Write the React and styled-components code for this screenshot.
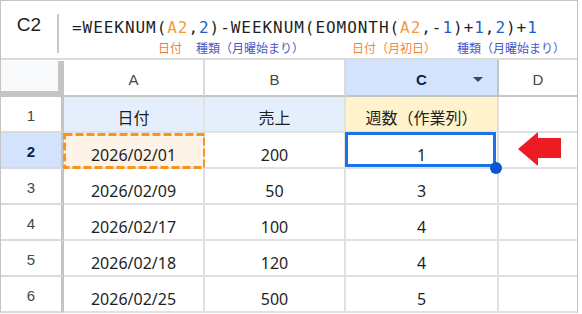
import React from 'react';
import styled, { createGlobalStyle } from 'styled-components';

const GlobalStyle = createGlobalStyle`
    body {
        margin: 0;
        background: #ffffff;
        font-family: "Noto Sans", "Noto Sans CJK JP", sans-serif;
    }
`;

const Frame = styled.div`
    width: 578px;
    box-sizing: border-box;
    border: 1px solid #c4c4c4;
    border-bottom: none;
    overflow: hidden;
`;

const FormulaBar = styled.div`
    display: flex;
    height: 57px;
    border-bottom: 2px solid #dadada;
`;

const NameBox = styled.div`
    width: 56px;
    padding-top: 12px;
    text-align: center;
    font-family: "Liberation Sans", Arial, sans-serif;
    font-size: 19px;
    line-height: 24px;
    color: #1f1f1f;
`;

const Divider = styled.div`
    width: 2px;
    height: 39px;
    margin-top: 13px;
    background: #c7c7c7;
`;

const FormulaArea = styled.div`
    display: flex;
    flex-direction: column;
    padding: 17px 0 0 13px;
`;

const FormulaLine = styled.div`
    font-family: "DejaVu Sans Mono", monospace;
    font-size: 16px;
    line-height: 20px;
    letter-spacing: 0.95px;
    color: #1f1f1f;
    white-space: nowrap;
`;

const Token = styled.span`
    color: ${p => p.$color || 'inherit'};
`;

const NoteLine = styled.div`
    display: flex;
    margin-top: 3px;
    font-family: "Noto Sans CJK JP", sans-serif;
    font-size: 12px;
    line-height: 14px;
    white-space: nowrap;
`;

const Note = styled.span`
    color: ${p => p.$color};
    margin-left: ${p => p.$gap}px;
`;

const Sheet = styled.div`
    display: grid;
    grid-template-columns: 63px 141px 141px 153px 78px;
    grid-template-rows: 37px repeat(6, 36px);
`;

const Corner = styled.div`
    background: #f8f9fa;
    border-right: 6px solid #c4c4c4;
    border-bottom: 6px solid #c4c4c4;
    margin-top: 1px;
`;

const ColHeader = styled.div`
    position: relative;
    display: grid;
    grid-template-columns: 1fr auto 1fr;
    align-items: center;
    padding-top: 3px;
    background: ${p => (p.$active ? '#d3e3fd' : '#ffffff')};
    border-right: ${p => (p.$last ? 'none' : `2px solid ${p.$active ? '#c4c4c4' : '#dadada'}`)};
    border-bottom: 2px solid #c4c4c4;
    font-family: "Liberation Sans", Arial, sans-serif;
    font-size: 15px;
    font-weight: ${p => (p.$active ? 700 : 400)};
    color: ${p => (p.$active ? '#0b2350' : '#444746')};
`;

const ColLabel = styled.span`
    grid-column: 2;
`;

const DropArrow = styled.span`
    grid-column: 3;
    justify-self: end;
    margin-right: 14px;
    width: 0;
    height: 0;
    border-left: 5.5px solid transparent;
    border-right: 5.5px solid transparent;
    border-top: 5px solid #444746;
`;

const RowHeader = styled.div`
    display: flex;
    align-items: center;
    justify-content: center;
    padding-top: 2px;
    background: ${p => (p.$active ? '#d3e3fd' : '#ffffff')};
    border-right: 3px solid #c4c4c4;
    border-bottom: 2px solid #dadada;
    font-family: "Liberation Sans", Arial, sans-serif;
    font-size: 15px;
    font-weight: ${p => (p.$active ? 700 : 400)};
    color: ${p => (p.$active ? '#0b2350' : '#444746')};
`;

const Cell = styled.div`
    position: relative;
    display: flex;
    align-items: flex-end;
    justify-content: center;
    padding-bottom: ${p => (p.$head ? 3 : 2)}px;
    background: ${p => p.$bg || '#ffffff'};
    border-right: ${p => (p.$last ? 'none' : '2px solid #e1e1e1')};
    border-bottom: 2px solid #e1e1e1;
    font-size: 16px;
    line-height: 20px;
    color: #1f1f1f;
    z-index: ${p => (p.$raise ? 1 : 'auto')};
`;

const Dashes = styled.svg`
    position: absolute;
    top: 0;
    left: -1px;
    pointer-events: none;
`;

const Selection = styled.div`
    position: absolute;
    top: -1px;
    left: -1px;
    right: 1px;
    bottom: 0;
    border: 3px solid #1a73e8;
`;

const Handle = styled.div`
    position: absolute;
    right: -5px;
    bottom: -7px;
    width: 12px;
    height: 12px;
    border-radius: 50%;
    background: #0b57d0;
    z-index: 2;
`;

const Pointer = styled.svg`
    align-self: center;
    margin-left: 3px;
`;

const rows = [
    ['2026/02/01', '200', '1'],
    ['2026/02/09', '50', '3'],
    ['2026/02/17', '100', '4'],
    ['2026/02/18', '120', '4'],
    ['2026/02/25', '500', '5'],
];

const ORANGE = '#f59b3a';
const BLUE = '#1b5fcc';

const App = () => (
    <>
        <GlobalStyle />
        <Frame>
            <FormulaBar>
                <NameBox>C2</NameBox>
                <Divider />
                <FormulaArea>
                    <FormulaLine>
                        =WEEKNUM(<Token $color={ORANGE}>A2</Token>,<Token $color={BLUE}>2</Token>)-WEEKNUM(EOMONTH(
                        <Token $color={ORANGE}>A2</Token>,-<Token $color={BLUE}>1</Token>)+<Token $color={BLUE}>1</Token>,
                        <Token $color={BLUE}>2</Token>)+<Token $color={BLUE}>1</Token>
                    </FormulaLine>
                    <NoteLine>
                        <Note $color="#f5793a" $gap={86}>日付</Note>
                        <Note $color="#4b55c8" $gap={14}>種類（月曜始まり）</Note>
                        <Note $color="#f5873a" $gap={48}>日付（月初日）</Note>
                        <Note $color="#4b55c8" $gap={21}>種類（月曜始まり）</Note>
                    </NoteLine>
                </FormulaArea>
            </FormulaBar>

            <Sheet>
                <Corner />
                <ColHeader><ColLabel>A</ColLabel></ColHeader>
                <ColHeader><ColLabel>B</ColLabel></ColHeader>
                <ColHeader $active><ColLabel>C</ColLabel><DropArrow /></ColHeader>
                <ColHeader $last><ColLabel>D</ColLabel></ColHeader>

                <RowHeader>1</RowHeader>
                <Cell $head $bg="#e5effc">日付</Cell>
                <Cell $head $bg="#e5effc">売上</Cell>
                <Cell $head $bg="#fff2cc">週数（作業列）</Cell>
                <Cell $last />

                {rows.map(([date, sales, week], i) => {
                    const first = i === 0;
                    return (
                        <React.Fragment key={date}>
                            <RowHeader $active={first}>{i + 2}</RowHeader>
                            <Cell $bg={first ? '#fdf3e7' : undefined}>
                                {first && (
                                    <Dashes width="143" height="36">
                                        <rect x="1.5" y="1.5" width="140" height="33" fill="none"
                                            stroke="#f7961e" strokeWidth="3" strokeDasharray="8 3" />
                                    </Dashes>
                                )}
                                {date}
                            </Cell>
                            <Cell>{sales}</Cell>
                            <Cell $raise={first}>
                                {week}
                                {first && <Selection />}
                                {first && <Handle />}
                            </Cell>
                            <Cell $last>
                                {first && (
                                    <Pointer width="43" height="34" viewBox="0 0 43 34">
                                        <polygon points="0,17 20,0 20,6 43,6 43,26 20,26 20,34" fill="#ed1c24" />
                                    </Pointer>
                                )}
                            </Cell>
                        </React.Fragment>
                    );
                })}
            </Sheet>
        </Frame>
    </>
);

export default App;
